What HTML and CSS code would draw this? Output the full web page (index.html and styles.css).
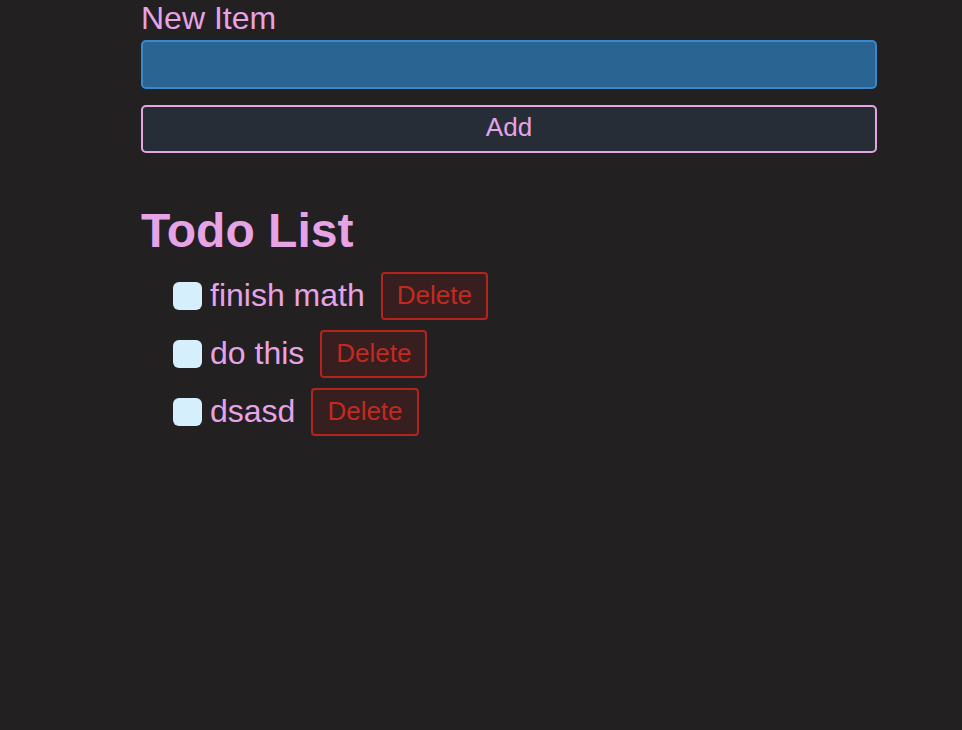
FILE: index.html
```html
<!DOCTYPE html>
<html>
<head>
<meta charset="utf-8">
<link rel="stylesheet" href="styles.css">
</head>
<body>
<main class="app">
  <form class="add-form">
    <label class="label" for="item">New Item</label>
    <input class="input" id="item" type="text">
    <button class="add-btn" type="button">Add</button>
  </form>
  <h1 class="title">Todo List</h1>
  <ul class="list">
    <li class="item"><span class="check"></span><span class="text">finish math</span><button class="del" type="button">Delete</button></li>
    <li class="item"><span class="check"></span><span class="text">do this</span><button class="del" type="button">Delete</button></li>
    <li class="item"><span class="check"></span><span class="text">dsasd</span><button class="del" type="button">Delete</button></li>
  </ul>
</main>
</body>
</html>
```

FILE: styles.css
```css
html, body {
  margin: 0;
  padding: 0;
  background: #222021;
  height: 100%;
}
body {
  font-family: "Liberation Sans", Arial, sans-serif;
  color: #e6a3e6;
}
.app {
  margin-left: 141px;
  width: 736px;
}
.add-form {
  display: flex;
  flex-direction: column;
}
.label {
  font-size: 32px;
  line-height: 37px;
  height: 40px;
}
.input {
  box-sizing: border-box;
  height: 49px;
  width: 100%;
  margin: 0;
  background: #296493;
  border: 2px solid #3a88cc;
  border-radius: 5px;
  outline: none;
}
.add-btn {
  box-sizing: border-box;
  margin-top: 16px;
  height: 48px;
  width: 100%;
  background: #272d36;
  border: 2px solid #e6a3e6;
  border-radius: 5px;
  color: #e6a3e6;
  font-family: "Liberation Sans", Arial, sans-serif;
  font-size: 26px;
  padding: 0 0 3px 0;
}
.title {
  margin: 50px 0 0 0;
  font-size: 48px;
  line-height: 55px;
  font-weight: bold;
  color: #e6a3e6;
}
.list {
  list-style: none;
  margin: 14px 0 0 0;
  padding: 0 0 0 32px;
  display: flex;
  flex-direction: column;
  gap: 10px;
}
.item {
  display: flex;
  align-items: center;
  height: 48px;
}
.check {
  width: 29px;
  height: 28px;
  background: #d6effd;
  border-radius: 6px;
  margin-right: 8px;
}
.text {
  font-size: 32px;
  line-height: 37px;
  margin-right: 16px;
  padding-bottom: 2px;
}
.del {
  box-sizing: border-box;
  height: 48px;
  padding: 0 14px 2px 14px;
  background: #371e1f;
  border: 2px solid #b4241c;
  border-radius: 4px;
  color: #c22a21;
  font-family: "Liberation Sans", Arial, sans-serif;
  font-size: 26px;
}
```
